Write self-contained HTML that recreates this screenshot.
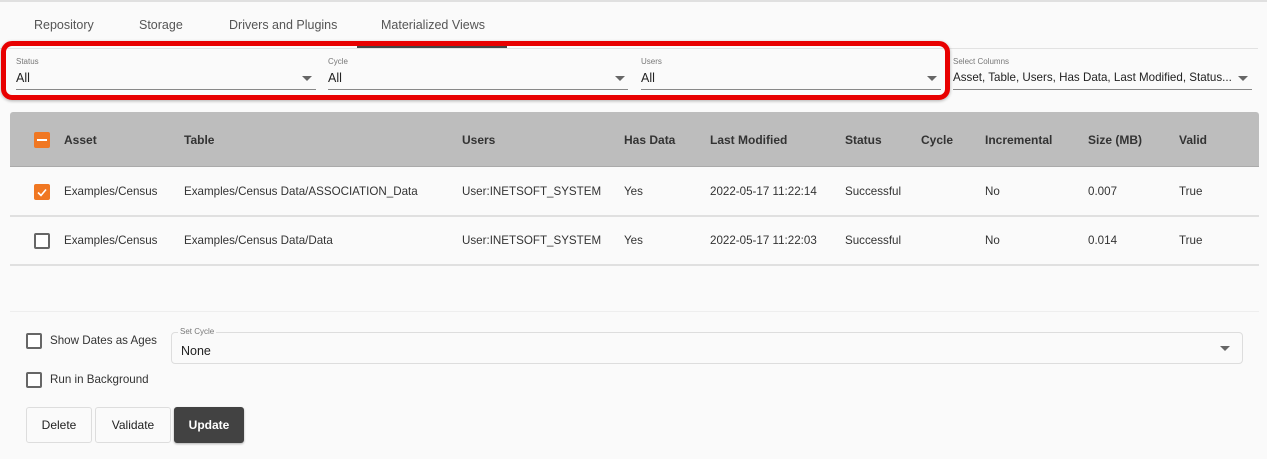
<!DOCTYPE html>
<html><head><meta charset="utf-8"><style>
*{box-sizing:border-box;margin:0;padding:0}
body{width:1267px;height:459px;background:#fafafa;font-family:"Liberation Sans",sans-serif;color:#222;position:relative;overflow:hidden;font-size:12px}
.a{position:absolute;white-space:nowrap}
.tab{top:18px;font-size:12.5px;color:#555}
.lbl{font-size:8px;color:#777}
.val{font-size:12.5px;color:#222}
.line{height:1px;background:#888}
.arr{width:0;height:0;border-left:5px solid transparent;border-right:5px solid transparent;border-top:5px solid #666}
.th{top:133px;font-weight:bold;font-size:12px;color:#333}
.td{font-size:11.6px;color:#333}
.cb{width:16px;height:16px;border:2px solid #666;border-radius:2px;background:#fff}
.btn{top:407px;height:36px;border:1px solid #ddd;border-radius:3px;background:#fafafa;font-size:12px;display:flex;align-items:center;justify-content:center;color:#222}
</style></head><body>
<div class="a" style="left:0;top:0;width:1267px;height:2px;background:#e0e0e0"></div>
<div class="a tab" style="left:34px">Repository</div>
<div class="a tab" style="left:139px">Storage</div>
<div class="a tab" style="left:229px">Drivers and Plugins</div>
<div class="a tab" style="left:381px">Materialized Views</div>
<div class="a" style="left:357px;top:46px;width:150px;height:2px;background:#444"></div>
<div class="a" style="left:0;top:48px;width:1258px;height:1px;background:#e2e2e2"></div>

<div class="a lbl" style="left:16px;top:57px">Status</div>
<div class="a val" style="left:16px;top:71px">All</div>
<div class="a arr" style="left:302px;top:76px"></div>
<div class="a line" style="left:16px;top:89px;width:300px"></div>
<div class="a lbl" style="left:328px;top:57px">Cycle</div>
<div class="a val" style="left:328px;top:71px">All</div>
<div class="a arr" style="left:615px;top:76px"></div>
<div class="a line" style="left:328px;top:89px;width:300px"></div>
<div class="a lbl" style="left:641px;top:57px">Users</div>
<div class="a val" style="left:641px;top:71px">All</div>
<div class="a arr" style="left:927px;top:76px"></div>
<div class="a line" style="left:641px;top:89px;width:300px"></div>
<div class="a lbl" style="left:953px;top:57px">Select Columns</div>
<div class="a val" style="left:953px;top:71px;font-size:11.6px">Asset, Table, Users, Has Data, Last Modified, Status...</div>
<div class="a arr" style="left:1238px;top:76px"></div>
<div class="a line" style="left:953px;top:89px;width:299px"></div>
<div class="a" style="left:1px;top:41px;width:949px;height:59px;border:5px solid #e80000;border-radius:11px;box-shadow:0 1px 3px rgba(0,0,0,.3)"></div>

<div class="a" style="left:10px;top:112px;width:1249px;height:55px;background:#bdbdbd;border-radius:3px 3px 0 0;border-bottom:1px solid #aaa"></div>
<div class="a" style="left:34px;top:132px;width:16px;height:16px;background:#f07722;border-radius:2px"><div style="position:absolute;left:3px;top:7px;width:10px;height:2px;background:#fff"></div></div>
<div class="a th" style="left:64px">Asset</div>
<div class="a th" style="left:184px">Table</div>
<div class="a th" style="left:462px">Users</div>
<div class="a th" style="left:624px">Has Data</div>
<div class="a th" style="left:710px">Last Modified</div>
<div class="a th" style="left:845px">Status</div>
<div class="a th" style="left:921px">Cycle</div>
<div class="a th" style="left:985px">Incremental</div>
<div class="a th" style="left:1088px">Size (MB)</div>
<div class="a th" style="left:1179px">Valid</div>

<div class="a" style="left:10px;top:167px;width:1249px;height:98px;background:#fafafa"></div>
<div class="a" style="left:10px;top:215px;width:1249px;height:2px;background:#e0e0e0"></div>
<div class="a" style="left:10px;top:264px;width:1249px;height:2px;background:#e0e0e0"></div>
<div class="a" style="left:34px;top:184px;width:16px;height:16px;background:#f07722;border-radius:2px"><svg width="16" height="16" style="position:absolute;left:0;top:0"><path d="M4 8.5l3 3 5-6" stroke="#fff" stroke-width="1.6" fill="none"/></svg></div>
<div class="a td" style="left:64px;top:185px">Examples/Census</div>
<div class="a td" style="left:184px;top:185px">Examples/Census Data/ASSOCIATION_Data</div>
<div class="a td" style="left:462px;top:185px">User:INETSOFT_SYSTEM</div>
<div class="a td" style="left:624px;top:185px">Yes</div>
<div class="a td" style="left:710px;top:185px">2022-05-17 11:22:14</div>
<div class="a td" style="left:845px;top:185px">Successful</div>
<div class="a td" style="left:985px;top:185px">No</div>
<div class="a td" style="left:1088px;top:185px">0.007</div>
<div class="a td" style="left:1179px;top:185px">True</div>
<div class="a cb" style="left:34px;top:233px"></div>
<div class="a td" style="left:64px;top:234px">Examples/Census</div>
<div class="a td" style="left:184px;top:234px">Examples/Census Data/Data</div>
<div class="a td" style="left:462px;top:234px">User:INETSOFT_SYSTEM</div>
<div class="a td" style="left:624px;top:234px">Yes</div>
<div class="a td" style="left:710px;top:234px">2022-05-17 11:22:03</div>
<div class="a td" style="left:845px;top:234px">Successful</div>
<div class="a td" style="left:985px;top:234px">No</div>
<div class="a td" style="left:1088px;top:234px">0.014</div>
<div class="a td" style="left:1179px;top:234px">True</div>

<div class="a" style="left:10px;top:311px;width:1249px;height:1px;background:#eee"></div>
<div class="a cb" style="left:26px;top:333px"></div>
<div class="a td" style="left:50px;top:334px">Show Dates as Ages</div>
<div class="a cb" style="left:26px;top:372px"></div>
<div class="a td" style="left:50px;top:373px">Run in Background</div>
<div class="a" style="left:171px;top:332px;width:1072px;height:32px;border:1px solid #ddd;border-radius:4px"></div>
<div class="a" style="left:178px;top:327px;background:#fafafa;padding:0 2px;font-size:8px;color:#777">Set Cycle</div>
<div class="a td" style="left:181px;top:344px;font-size:12.5px;color:#222">None</div>
<div class="a arr" style="left:1220px;top:346px"></div>
<div class="a btn" style="left:26px;width:66px">Delete</div>
<div class="a btn" style="left:95px;width:76px">Validate</div>
<div class="a btn" style="left:174px;width:70px;background:#424242;color:#fff;font-weight:bold;border-color:#424242;box-shadow:0 1px 2px rgba(0,0,0,.3)">Update</div>
</body></html>
